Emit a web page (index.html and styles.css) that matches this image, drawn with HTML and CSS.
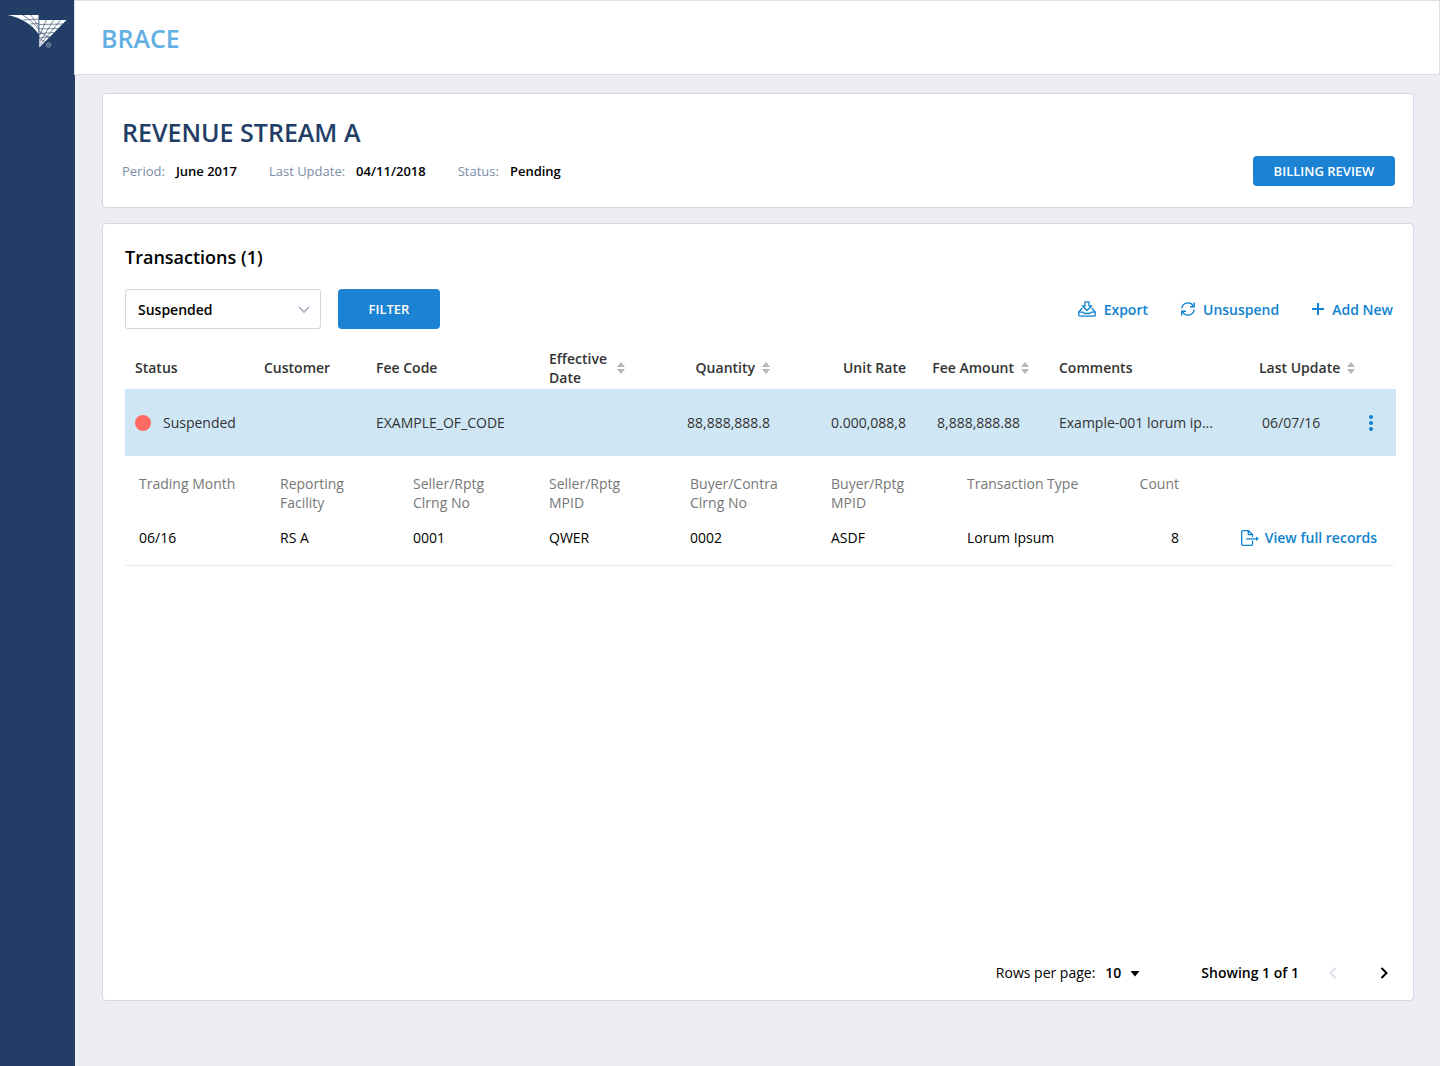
FILE: index.html
```
<!DOCTYPE html>
<html lang="en">
<head>
    <meta charset="utf-8">
    <title>BRACE</title>
    <link rel="stylesheet" href="styles.css">
</head>
<body>
    <aside class="sidebar">
        <a href="#" class="logo" aria-label="Home">
            <svg width="60" height="36" viewBox="0 0 60 36">
                <path d="M0 1H30.500V20C24 10 13 4 0 1z" fill="#fff"/>
                <path d="M31.300 6H58.500L31.300 33.500z" fill="#fff"/>
                <g fill="none" stroke="#223e66" stroke-width="0.6">
                    <path d="M14 0.500C21 5 26 9 31 16M22.500 0.500C26 5 28 9 31 14"/>
                    <path d="M15 6L31 5M22 10L31 9.500"/>
                    <path d="M31 10.500L55 10M31 15L50 14.500M31 19.500L46 18.500M31 24L42 22.500"/>
                    <path d="M38.500 5.500L31.500 22M46 5.500L32 28M53 5.500L32 31M31 17L41 24M31 24L37 28"/>
                </g>
                <circle cx="40.500" cy="31" r="2.200" fill="none" stroke="#a7b2c2" stroke-width="0.7"/>
                <path d="M39.800 32.200V29.900H40.700A0.600 0.600 0 0 1 40.700 31.100H39.800M40.700 31.100L41.400 32.200" fill="none" stroke="#a7b2c2" stroke-width="0.4"/>
            </svg>
        </a>
    </aside>

    <div class="page">
        <header class="topbar">
            <div class="brand">BRACE</div>
        </header>

        <main class="content">
            <section class="card summary">
                <div>
                    <h1>REVENUE STREAM A</h1>
                    <dl class="meta">
                        <div><dt>Period:</dt><dd>June 2017</dd></div>
                        <div><dt>Last Update:</dt><dd>04/11/2018</dd></div>
                        <div><dt>Status:</dt><dd>Pending</dd></div>
                    </dl>
                </div>
                <button type="button" class="btn btn-review">BILLING REVIEW</button>
            </section>

            <section class="card transactions">
                <h2>Transactions (1)</h2>

                <div class="toolbar">
                    <div class="select-box">
                        <select aria-label="Transaction status">
                            <option>Suspended</option>
                            <option>Pending</option>
                        </select>
                        <svg width="12" height="8" viewBox="0 0 12 8"><path d="M1 1l5 5 5-5" fill="none" stroke="#a9b4c4" stroke-width="1.6"/></svg>
                    </div>
                    <button type="button" class="btn btn-filter">FILTER</button>

                    <div class="actions">
                        <button type="button" class="link-btn">
                            <svg width="18" height="16" viewBox="0 0 18 16" fill="none" stroke="#0e82d0" stroke-width="1.3" stroke-linejoin="round">
                                <path d="M7 0.800H11V5H13.500L9 9.500L4.500 5H7z"/>
                                <path d="M4.300 7L0.800 11V14.200A1 1 0 0 0 1.800 15.200H16.200A1 1 0 0 0 17.200 14.200V11L13.700 7"/>
                                <path d="M1 11.200H5L6.500 12.500H11.500L13 11.200H17"/>
                            </svg>
                            Export
                        </button>
                        <button type="button" class="link-btn">
                            <svg width="14" height="14" viewBox="0 0 14 14" fill="none" stroke="#0e82d0" stroke-width="1.4">
                                <path d="M0.800 6.500A6.200 6.200 0 0 1 12.300 4M13.200 7.500A6.200 6.200 0 0 1 1.700 10"/>
                                <path d="M13.200 0.500V4.800H9M0.800 13.500V9.200H5"/>
                            </svg>
                            Unsuspend
                        </button>
                        <button type="button" class="link-btn">
                            <svg width="12" height="12" viewBox="0 0 12 12"><path d="M6 0V12M0 6H12" fill="none" stroke="#0e82d0" stroke-width="2"/></svg>
                            Add New
                        </button>
                    </div>
                </div>

                <table class="grid">
                    <colgroup>
                        <col class="col-status">
                        <col class="col-customer">
                        <col class="col-code">
                        <col class="col-date">
                        <col class="col-quantity">
                        <col class="col-rate">
                        <col class="col-amount">
                        <col>
                        <col class="col-update">
                        <col class="col-menu">
                    </colgroup>
                    <thead>
                        <tr>
                            <th>Status</th>
                            <th>Customer</th>
                            <th>Fee Code</th>
                            <th><button type="button" class="sort sort-wide">Effective<br>Date <svg width="8" height="12" viewBox="0 0 8 12"><path d="M4 0L8 5H0zM0 7H8L4 12z"/></svg></button></th>
                            <th class="num"><button type="button" class="sort">Quantity <svg width="8" height="12" viewBox="0 0 8 12"><path d="M4 0L8 5H0zM0 7H8L4 12z"/></svg></button></th>
                            <th class="num">Unit Rate</th>
                            <th class="num amount-head"><button type="button" class="sort">Fee Amount <svg width="8" height="12" viewBox="0 0 8 12"><path d="M4 0L8 5H0zM0 7H8L4 12z"/></svg></button></th>
                            <th>Comments</th>
                            <th class="update"><button type="button" class="sort">Last Update <svg width="8" height="12" viewBox="0 0 8 12"><path d="M4 0L8 5H0zM0 7H8L4 12z"/></svg></button></th>
                            <th></th>
                        </tr>
                    </thead>
                    <tbody>
                        <tr class="selected">
                            <td><span class="status">Suspended</span></td>
                            <td></td>
                            <td>EXAMPLE_OF_CODE</td>
                            <td></td>
                            <td class="num">88,888,888.8</td>
                            <td class="num">0.000,088,8</td>
                            <td class="num amount">8,888,888.88</td>
                            <td>Example-001 lorum ip...</td>
                            <td class="date">06/07/16</td>
                            <td class="menu">
                                <button type="button" class="icon-btn" aria-label="Row menu">
                                    <svg width="4" height="16" viewBox="0 0 4 16" fill="#0e82d0"><circle cx="2" cy="2" r="2"/><circle cx="2" cy="8" r="2"/><circle cx="2" cy="14" r="2"/></svg>
                                </button>
                            </td>
                        </tr>
                    </tbody>
                </table>

                <div class="details">
                    <table class="detail-grid">
                        <colgroup>
                            <col class="col-month">
                            <col class="col-facility">
                            <col class="col-seller">
                            <col class="col-mpid">
                            <col class="col-mpid">
                            <col class="col-buyer">
                            <col>
                            <col class="col-count">
                            <col class="col-link">
                        </colgroup>
                        <thead>
                            <tr>
                                <th>Trading Month</th>
                                <th>Reporting<br>Facility</th>
                                <th>Seller/Rptg<br>Clrng No</th>
                                <th>Seller/Rptg<br>MPID</th>
                                <th>Buyer/Contra<br>Clrng No</th>
                                <th>Buyer/Rptg<br>MPID</th>
                                <th>Transaction Type</th>
                                <th class="count">Count</th>
                                <th></th>
                            </tr>
                        </thead>
                        <tbody>
                            <tr>
                                <td>06/16</td>
                                <td>RS A</td>
                                <td>0001</td>
                                <td>QWER</td>
                                <td>0002</td>
                                <td>ASDF</td>
                                <td>Lorum Ipsum</td>
                                <td class="count">8</td>
                                <td>
                                    <a href="#" class="records-link">
                                        <svg width="18" height="16" viewBox="0 0 18 16" fill="none" stroke="#0e82d0" stroke-width="1.3">
                                            <path d="M11.500 10.500V14.400A1 1 0 0 1 10.500 15.300H1.600A0.900 0.900 0 0 1 0.700 14.400V1.600A0.900 0.900 0 0 1 1.600 0.700H7.500L11.500 4.500V7"/>
                                            <path d="M7.300 0.700V4.700H11.500M5 8.800H16"/>
                                            <path d="M15 6.500L18 8.800L15 11.100z" fill="#0e82d0" stroke="none"/>
                                        </svg>
                                        View full records
                                    </a>
                                </td>
                            </tr>
                        </tbody>
                    </table>
                </div>

                <footer class="pager">
                    <label for="rows">Rows per page:</label>
                    <div class="rows-box">
                        <select id="rows">
                            <option>10</option>
                            <option>25</option>
                            <option>50</option>
                        </select>
                        <svg width="10" height="6" viewBox="0 0 10 6"><path d="M0.500 0H9.500L5 5.500z"/></svg>
                    </div>
                    <span class="showing">Showing 1 of 1</span>
                    <button type="button" class="icon-btn" aria-label="Previous page" disabled>
                        <svg width="8" height="12" viewBox="0 0 8 12"><path d="M6.500 1L1.500 6L6.500 11" fill="none" stroke="#dde1e7" stroke-width="2"/></svg>
                    </button>
                    <button type="button" class="icon-btn next" aria-label="Next page">
                        <svg width="8" height="12" viewBox="0 0 8 12"><path d="M1.500 1L6.500 6L1.500 11" fill="none" stroke="#000" stroke-width="2"/></svg>
                    </button>
                </footer>
            </section>
        </main>
    </div>
</body>
</html>
```

FILE: styles.css
```
* {
    box-sizing: border-box;
}

body {
    margin: 0;
    display: flex;
    min-height: 100vh;
    background-color: #edeef3;
    font-family: "Open Sans", sans-serif;
    font-size: 14px;
    line-height: 19px;
    color: #000;
}

button,
select {
    font: inherit;
    color: inherit;
    margin: 0;
    padding: 0;
    border: none;
    background: none;
    cursor: pointer;
}

select {
    appearance: none;
    font-weight: 600;
}

svg {
    display: block;
    flex: none;
}

.sidebar {
    width: 75px;
    flex: none;
    background-color: #223e66;
}

.logo {
    display: block;
    padding: 14px 0 0 8px;
}

.page {
    flex: 1;
    min-width: 0;
    display: flex;
    flex-direction: column;
}

.topbar {
    height: 75px;
    margin-left: -1px;
    padding-left: 26px;
    display: flex;
    align-items: center;
    background-color: #fff;
    border: 1px solid #dcdfe8;
}

.brand {
    font-size: 25px;
    line-height: 36px;
    font-weight: 600;
    color: #62b0e3;
}

.content {
    flex: 1;
    display: flex;
    flex-direction: column;
    gap: 15px;
    padding: 18px 26px 65px 27px;
}

.card {
    background-color: #fff;
    border: 1px solid #d5d9e3;
    border-radius: 4px;
}

.summary {
    display: flex;
    justify-content: space-between;
    align-items: flex-end;
    padding: 20px 18px 21px 19px;
}

h1 {
    margin: 0 0 12px;
    font-size: 25px;
    line-height: 36px;
    font-weight: 600;
    color: #223e66;
}

.meta {
    display: flex;
    gap: 32px;
    margin: 0 0 5px;
    font-size: 13px;
}

.meta div {
    display: flex;
    gap: 11px;
}

.meta dt {
    color: #7b8ca8;
}

.meta dd {
    margin: 0;
    font-weight: 600;
}

.btn {
    border-radius: 4px;
    background-color: #1c82d4;
    color: #fff;
    font-size: 13px;
    font-weight: 600;
}

.btn-review {
    width: 142px;
    height: 30px;
}

.btn-filter {
    width: 102px;
    height: 40px;
    margin-left: 17px;
}

.transactions {
    flex: 1;
    display: flex;
    flex-direction: column;
    padding: 21px 17px 18px 22px;
}

h2 {
    margin: 0 0 19px;
    font-size: 18px;
    line-height: 25px;
    font-weight: 600;
}

.toolbar {
    display: flex;
    align-items: center;
    margin-bottom: 17px;
}

.select-box {
    position: relative;
}

.select-box select {
    width: 196px;
    height: 40px;
    padding-left: 12px;
    border: 1px solid #d0d5e0;
    border-radius: 3px;
}

.select-box svg {
    position: absolute;
    right: 11px;
    top: 17px;
    pointer-events: none;
}

.actions {
    display: flex;
    gap: 33px;
    margin-left: auto;
    margin-right: 3px;
}

.link-btn,
.records-link {
    display: inline-flex;
    align-items: center;
    gap: 8px;
    color: #0e82d0;
    font-weight: 600;
    text-decoration: none;
}

table {
    width: 100%;
    table-layout: fixed;
    border-collapse: collapse;
}

th,
td {
    padding: 0;
    text-align: left;
    white-space: nowrap;
}

.grid th,
.grid td {
    padding: 0 10px;
    color: #333;
}

.grid th {
    height: 43px;
    font-weight: 600;
}

.grid .selected td {
    height: 67px;
}

.grid .num {
    text-align: right;
}

.grid .amount-head {
    padding-right: 20px;
}

.grid .amount {
    padding-right: 29px;
}

.grid .update {
    padding-right: 0;
}

.grid .date {
    padding: 0 0 0 13px;
}

.grid .menu {
    padding-right: 12px;
}

.col-status { width: 129px; }
.col-customer { width: 112px; }
.col-code { width: 173px; }
.col-date { width: 110px; }
.col-quantity { width: 131px; }
.col-rate { width: 136px; }
.col-amount { width: 133px; }
.col-update { width: 110px; }
.col-menu { width: 37px; }

.sort {
    display: inline-flex;
    align-items: center;
    gap: 7px;
    text-align: left;
    font-weight: 600;
}

.sort-wide {
    gap: 10px;
}

.sort svg {
    fill: #b4b7bb;
}

.selected {
    background-color: #cfe6f5;
}

.status {
    display: flex;
    align-items: center;
    gap: 12px;
}

.status::before {
    content: "";
    width: 16px;
    height: 16px;
    border-radius: 50%;
    background-color: #ff6b60;
}

.details {
    margin-right: 2px;
    padding: 18px 17px 18px 14px;
    border-bottom: 1px solid #e8eaf1;
}

.detail-grid th {
    padding-bottom: 16px;
    vertical-align: top;
    font-weight: 400;
    color: #777;
}

.detail-grid .count {
    text-align: right;
}

.col-month { width: 141px; }
.col-facility { width: 133px; }
.col-seller { width: 136px; }
.col-mpid { width: 141px; }
.col-buyer { width: 136px; }
.col-count { width: 40px; }
.col-link { width: 198px; }

.records-link {
    display: flex;
    justify-content: flex-end;
    gap: 6px;
}

.pager {
    display: flex;
    align-items: center;
    margin-top: auto;
}

.pager label {
    margin-left: auto;
}

.rows-box {
    position: relative;
    margin-left: 10px;
}

.rows-box select {
    width: 36px;
}

.rows-box svg {
    position: absolute;
    right: 1px;
    top: 8px;
    pointer-events: none;
}

.showing {
    margin: 0 30px 0 60px;
    font-weight: 600;
}

.icon-btn {
    display: block;
}

.next {
    margin: 0 8px 0 43px;
}
```
